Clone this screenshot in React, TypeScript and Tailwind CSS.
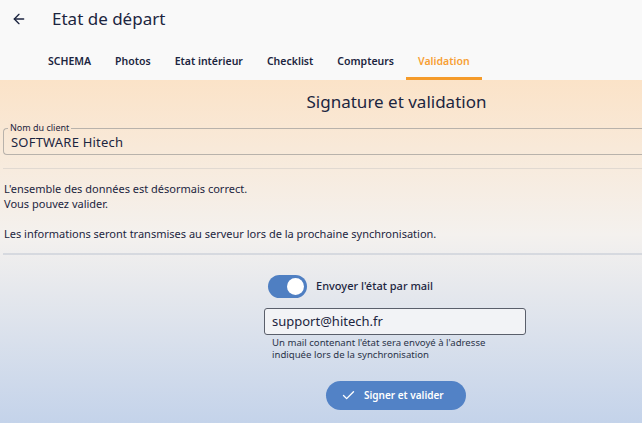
import { ArrowLeft, Check } from "lucide-react";

const tabs = ["SCHEMA", "Photos", "Etat intérieur", "Checklist", "Compteurs", "Validation"];

const App = () => {
  return (
    <div
      className="w-[642px] h-[423px] overflow-hidden flex flex-col text-[#1c2540]"
      style={{ fontFamily: "'Noto Sans', 'Open Sans', sans-serif" }}
    >
      {/* header */}
      <div className="bg-[#f9f9f9]">
        <div className="h-[37px] flex items-center">
          <ArrowLeft size={16} strokeWidth={2} className="ml-[11px]" />
          <h1 className="ml-[25px] text-[17px] leading-none">Etat de départ</h1>
        </div>
        <div className="h-[43px] flex items-end pl-[36px]">
          {tabs.map((t) => (
            <div
              key={t}
              className={
                t === "Validation"
                  ? "h-full flex items-center px-3 pt-[10px] text-[10.5px] font-semibold text-[#f7a035] border-b-[3px] border-[#f59b2a]"
                  : "h-full flex items-center px-3 pt-[7px] text-[10.5px] font-semibold"
              }
            >
              {t}
            </div>
          ))}
        </div>
      </div>

      {/* content */}
      <div className="flex-1 bg-gradient-to-b from-[#fbe3c8] via-[#f4f1ee] via-45% to-[#c4d3ea] pl-[3px]">
        <h2 className="text-[17px] text-center pl-[148px] mt-[12px] leading-[20px]">
          Signature et validation
        </h2>

        <div className="relative mt-[16px] h-[27px] border border-r-0 border-[#b8b2ab] rounded-l-[4px]">
          <span className="absolute -top-[7px] left-[4px] px-[2px] text-[9px] leading-[12px] bg-[#f9e6d2]">
            Nom du client
          </span>
          <div className="pl-[7px] pt-[5px] text-[13px] leading-[16px] tracking-[0.2px]">SOFTWARE Hitech</div>
        </div>

        <div className="mt-[13px] h-px bg-[#e1d9d1]" />

        <div className="pl-[1px] pt-[12px] text-[11px] leading-[15px]">
          <p>L'ensemble des données est désormais correct.</p>
          <p>Vous pouvez valider.</p>
          <p className="mt-[15px]">Les informations seront transmises au serveur lors de la prochaine synchronisation.</p>
        </div>

        <div className="mt-[12px] h-[2px] bg-[#d6d9df]" />

        <div className="ml-[261px] mt-[20px] w-[262px]">
          <div className="flex items-center pl-[4px]">
            <div className="w-[39px] h-[23px] rounded-full bg-[#4f7fc2] flex items-center justify-end pr-[3px]">
              <div className="w-[17px] h-[17px] rounded-full bg-white" />
            </div>
            <span className="ml-[9px] text-[11px] font-medium">Envoyer l'état par mail</span>
          </div>
          <div className="mt-[10px] h-[27px] border border-[#5a5f6b] rounded-[3px] bg-[#f2f3f6] flex items-center pl-[7px] text-[13px]">
            support@hitech.fr
          </div>
          <p className="mt-[2px] pl-[8px] text-[9.6px] leading-[12px] text-[#2a3349]">
            Un mail contenant l'état sera envoyé à l'adresse
            <br />
            indiquée lors de la synchronisation
          </p>
        </div>

        <div className="flex justify-center pl-[147px] mt-[20px]">
          <button className="w-[140px] h-[29px] rounded-full bg-[#5282c6] text-white text-[10px] font-semibold flex items-center pl-[15px] gap-[8px]">
            <Check size={15} strokeWidth={2.2} />
            Signer et valider
          </button>
        </div>
      </div>
    </div>
  );
};

export default App;
